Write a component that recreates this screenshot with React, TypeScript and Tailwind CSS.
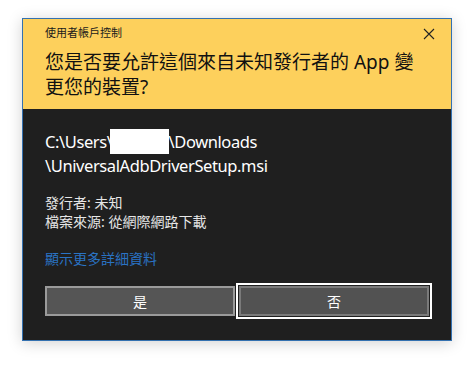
import React from "react";

const font = { fontFamily: '"Noto Sans", "Noto Sans CJK TC", sans-serif' };

export default function App() {
  return (
    <div className="w-[474px] h-[367px] bg-white relative" style={font}>
      <div className="absolute left-[22px] top-[18px] w-[430px] h-[323px] border border-[#3471b0] shadow-[0_2px_14px_rgba(0,0,0,0.18)] flex flex-col">
        <div className="bg-[#fdd05c] px-[22px] pt-[6px] pb-[9px] relative">
          <div className="text-[11px] leading-[15px] text-[#1a1a1a]">使用者帳戶控制</div>
          <div className="mt-[10px] text-[19px] leading-[25px] text-[#111]">
            您是否要允許這個來自未知發行者的 App 變
            <br />
            更您的裝置?
          </div>
          <svg className="absolute right-[16px] top-[9px]" width="12" height="12" viewBox="0 0 12 12">
            <path d="M1 1 L11 11 M11 1 L1 11" stroke="#222" strokeWidth="1.1" fill="none" />
          </svg>
        </div>
        <div className="flex-1 bg-[#1f1f1f] px-[22px] pt-[20px] text-white">
          <div className="text-[16.5px] leading-[24px] tracking-[-0.4px]">
            <div className="flex items-center">
              <span>C:\Users\</span>
              <span className="inline-block w-[59px] h-[25px] bg-white -ml-[3px]" />
              <span>\Downloads</span>
            </div>
            <div>\UniversalAdbDriverSetup.msi</div>
          </div>
          <div className="mt-[15px] text-[14px] leading-[19px] text-[#e6e6e6]">
            <div>發行者: 未知</div>
            <div>檔案來源: 從網際網路下載</div>
          </div>
          <div className="mt-[18px] text-[14px] leading-[19px] text-[#2a73c4]">顯示更多詳細資料</div>
          <div className="mt-[18px] grid grid-cols-2 gap-[4px]">
            <div className="h-[30px] bg-[#555555] border-2 border-[#9a9a9a] flex items-center justify-center text-[14px] text-white">是</div>
            <div className="h-[30px] bg-[#525252] border-2 border-[#7a7a7a] outline-2 outline-white outline-offset-[1px] flex items-center justify-center text-[14px] text-white">否</div>
          </div>
        </div>
      </div>
    </div>
  );
}
